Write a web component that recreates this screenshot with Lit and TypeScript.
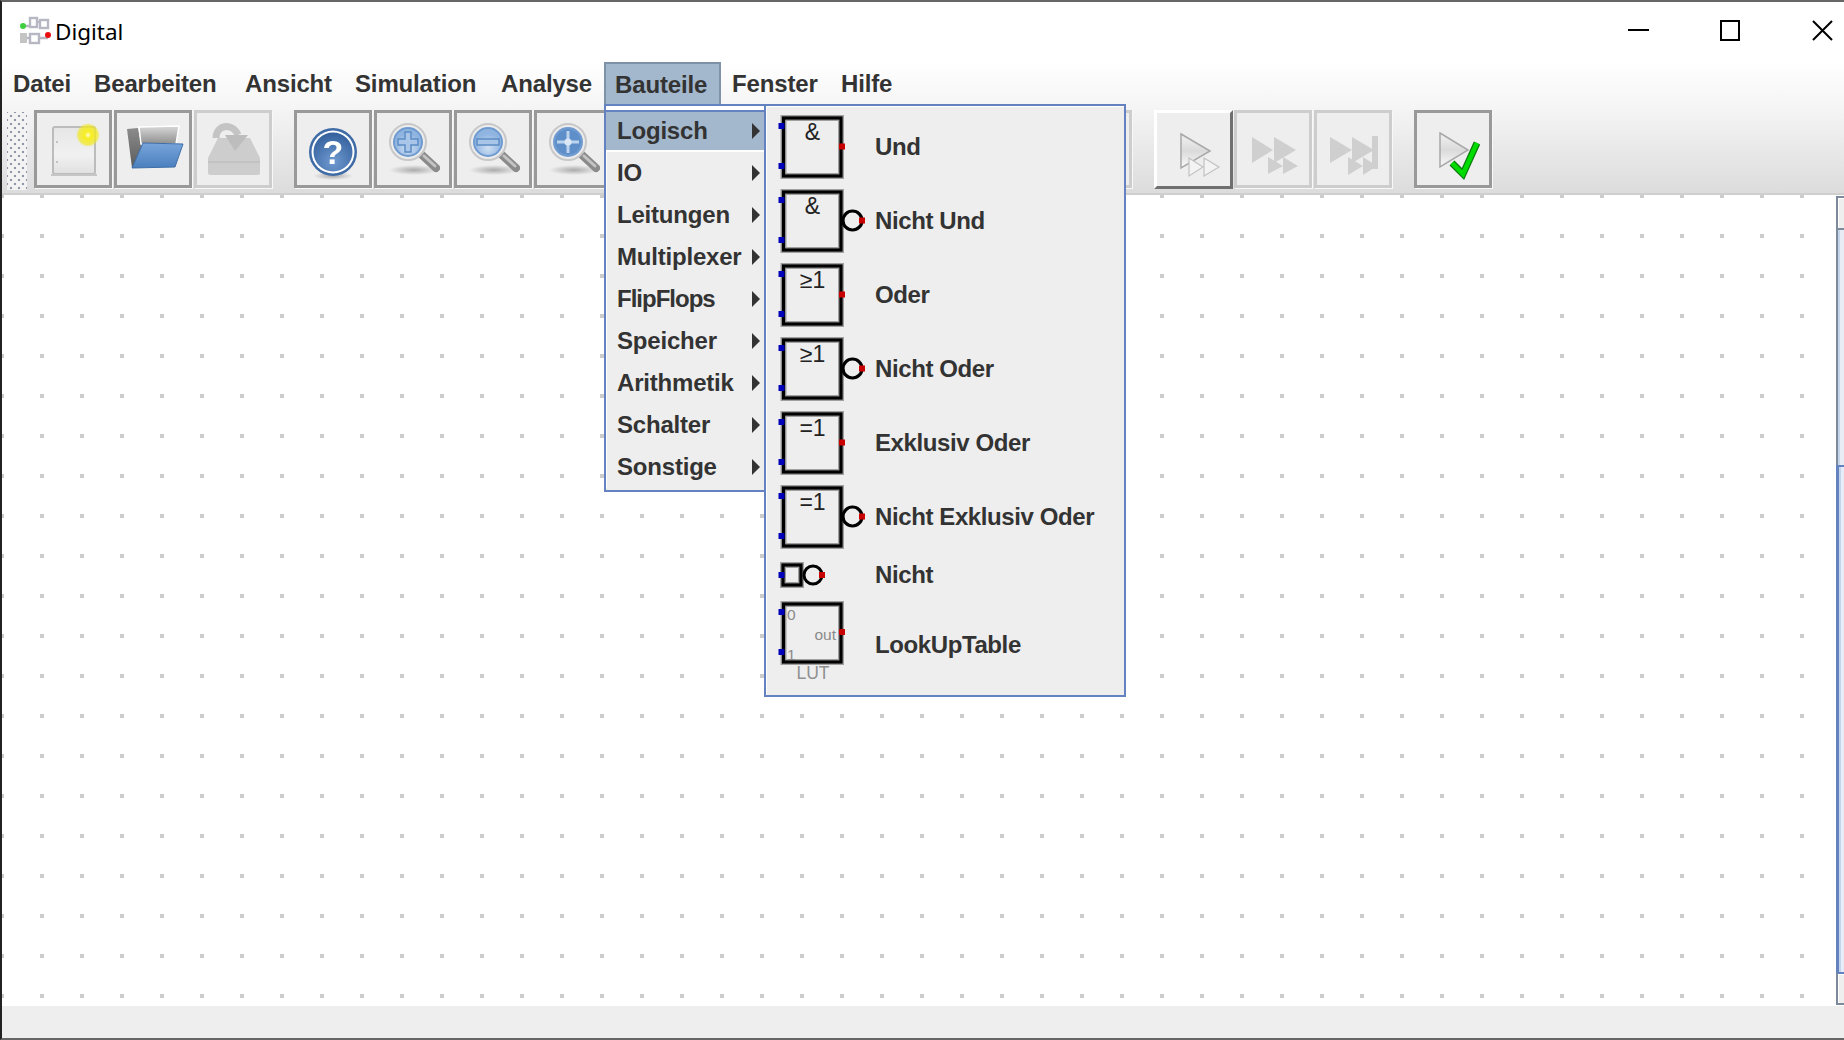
import { LitElement, html, css, svg } from "lit";
import { customElement } from "lit/decorators.js";

const MENUS = ["Datei", "Bearbeiten", "Ansicht", "Simulation", "Analyse", "Bauteile", "Fenster", "Hilfe"];
const GROUPS = ["Logisch", "IO", "Leitungen", "Multiplexer", "FlipFlops", "Speicher", "Arithmetik", "Schalter", "Sonstige"];

const gateBox = (label: string, bubble: boolean) => svg`
  <rect class="halo" x="16.5" y="8" width="57.5" height="58"></rect>
  <rect class="line" x="16.5" y="8" width="57.5" height="58"></rect>
  <text class="gl" x="45.5" y="30" text-anchor="middle">${label}</text>
  ${bubble ? svg`<circle class="line" cx="85.5" cy="36.5" r="9.5"></circle>` : ""}
  <rect class="in" x="11.5" y="13" width="6" height="6"></rect>
  <rect class="in" x="11.5" y="53" width="6" height="6"></rect>
  <rect class="out" x="${bubble ? 92 : 72}" y="33.5" width="6" height="6"></rect>`;

const notGate = svg`
  <rect class="halo" x="16" y="11" width="18" height="20"></rect>
  <rect class="line" x="16" y="11" width="18" height="20"></rect>
  <circle class="thin" cx="46" cy="21" r="9"></circle>
  <rect class="in" x="11.5" y="18" width="6" height="6"></rect>
  <rect class="out" x="52" y="18" width="6" height="6"></rect>`;

const lutGate = svg`
  <rect class="halo" x="16.5" y="8" width="57.5" height="58"></rect>
  <rect class="line" x="16.5" y="8" width="57.5" height="58"></rect>
  <text class="pin" x="20" y="24">0</text>
  <text class="pin" x="20" y="64">1</text>
  <text class="pin" x="69" y="44" text-anchor="end">out</text>
  <text class="lut-name" x="46" y="83" text-anchor="middle">LUT</text>
  <rect class="in" x="11.5" y="13" width="6" height="6"></rect>
  <rect class="in" x="11.5" y="53" width="6" height="6"></rect>
  <rect class="out" x="72" y="33" width="6" height="6"></rect>`;

const PARTS = [
  { name: "Und", size: "tall", h: 74, art: gateBox("&", false) },
  { name: "Nicht Und", size: "tall", h: 74, art: gateBox("&", true) },
  { name: "Oder", size: "tall", h: 74, art: gateBox("≥1", false) },
  { name: "Nicht Oder", size: "tall", h: 74, art: gateBox("≥1", true) },
  { name: "Exklusiv Oder", size: "tall", h: 74, art: gateBox("=1", false) },
  { name: "Nicht Exklusiv Oder", size: "tall", h: 74, art: gateBox("=1", true) },
  { name: "Nicht", size: "short", h: 42, art: notGate },
  { name: "LookUpTable", size: "lut", h: 98, art: lutGate },
];

const icon = (body: unknown) => html`<svg class="ico" viewBox="3 3 72 72" width="72" height="72">${body}</svg>`;

const magnifier = (inner: unknown) => svg`
  <ellipse cx="40" cy="60" rx="25" ry="5" fill="url(#shadow)"></ellipse>
  <line x1="48" y1="45" x2="62" y2="58" stroke="#8b8b8b" stroke-width="8" stroke-linecap="round"></line>
  <line x1="50" y1="46" x2="61" y2="56" stroke="#c4c4c4" stroke-width="3" stroke-linecap="round"></line>
  <circle cx="34" cy="32" r="18" fill="#ececec" stroke="#c8c8c8" stroke-width="2"></circle>
  <circle cx="34" cy="32" r="14" fill="url(#lens)" stroke="#6f9bd0" stroke-width="2"></circle>
  ${inner}`;

const ICONS = {
  newFile: svg`
    <rect x="19" y="17" width="42" height="47" rx="2" fill="url(#page)" stroke="#bcbcbc" stroke-width="2"></rect>
    <line x1="17" y1="65" x2="63" y2="65" stroke="#c6c6c6" stroke-width="2"></line>
    <circle cx="23" cy="32" r="1" fill="#b5b5b5"></circle><circle cx="23" cy="52" r="1" fill="#b5b5b5"></circle>
    <circle cx="54" cy="25" r="12" fill="url(#glow)"></circle>`,
  open: svg`
    <polygon points="13,19 24,18 32,57 18,58" fill="url(#folderBack)"></polygon>
    <polygon points="25,17 65,16 62,34 27,34" fill="url(#paper)" stroke="#fff" stroke-width="1.5"></polygon>
    <polygon points="29,33 69,34 61,57 18,58" fill="url(#folder)" stroke="#3d6ea8" stroke-width="1"></polygon>`,
  save: svg`
    <path d="M24 28 H56 L66 48 V63 Q66 65 64 65 H16 Q14 65 14 63 V48 Z" fill="#cdcdcd"></path>
    <path d="M14 52 H66" stroke="#c2c2c2" stroke-width="2"></path>
    <path d="M22 28 C22 15 38 12 44 25" fill="none" stroke="#c4c4c4" stroke-width="7"></path>
    <polygon points="31,25 54,25 41,41" fill="#bdbdbd"></polygon>`,
  help: svg`
    <ellipse cx="39" cy="66" rx="20" ry="4" fill="url(#shadow)"></ellipse>
    <circle cx="39" cy="42" r="24" fill="#3f6ba6"></circle>
    <circle cx="39" cy="42" r="21.5" fill="#fff"></circle>
    <circle cx="39" cy="42" r="19.5" fill="url(#helpFill)"></circle>
    <text class="q" x="39" y="54" text-anchor="middle">?</text>`,
  zoomIn: magnifier(svg`<path d="M31 22 H37 V29 H44 V35 H37 V42 H31 V35 H24 V29 H31 Z" fill="#a9c6e8" stroke="#5c8cc5" stroke-width="1.5"></path>`),
  zoomOut: magnifier(svg`<rect x="23" y="29" width="22" height="6" fill="#a9c6e8" stroke="#5c8cc5" stroke-width="1.5"></rect>`),
  fit: magnifier(svg`
    <circle cx="34" cy="32" r="13" fill="#5f8fc9"></circle>
    <path d="M32.5 21 H35.5 V30.5 H45 V33.5 H35.5 V43 H32.5 V33.5 H23 V30.5 H32.5 Z" fill="#bcd3ee"></path>
    <circle cx="34" cy="32" r="3.5" fill="#dce8f6"></circle>`),
  play: svg`
    <polygon points="26,23 55,40 26,57" fill="url(#tri)" stroke="#a8a8a8" stroke-width="1.5"></polygon>
    <polygon points="34,47 48,56 34,65" fill="#f3f3f3" stroke="#c2c2c2" stroke-width="1.2"></polygon>
    <polygon points="49,47 64,56 49,65" fill="#f3f3f3" stroke="#c2c2c2" stroke-width="1.2"></polygon>`,
  next: svg`
    <g fill="#cfcfcf"><polygon points="18,27 39,40 18,53"></polygon><polygon points="40,27 62,40 40,53"></polygon>
    <polygon points="34,47 49,56 34,64"></polygon><polygon points="49,47 64,56 49,64"></polygon></g>`,
  end: svg`
    <g fill="#cfcfcf"><polygon points="16,27 38,40 16,53"></polygon><polygon points="38,27 60,40 38,53"></polygon>
    <rect x="58" y="26" width="6" height="33"></rect>
    <polygon points="34,47 49,56 34,65"></polygon><polygon points="49,47 63,56 49,65"></polygon></g>`,
  check: svg`
    <polygon points="26,23 54,40 26,57" fill="url(#tri)" stroke="#a8a8a8" stroke-width="1.5"></polygon>
    <polyline points="38,53 49,64 63,33" fill="none" stroke="#0c7a0c" stroke-width="7" stroke-linejoin="miter"></polyline>
    <polyline points="38,53 49,64 63,33" fill="none" stroke="#00dc00" stroke-width="4.5"></polyline>`,
};

const TOOLS: { art?: unknown; kind: string; sep?: boolean }[] = [
  { art: ICONS.newFile, kind: "on" },
  { art: ICONS.open, kind: "on" },
  { art: ICONS.save, kind: "off" },
  { art: ICONS.help, kind: "on", sep: true },
  { art: ICONS.zoomIn, kind: "on" },
  { art: ICONS.zoomOut, kind: "on" },
  { art: ICONS.fit, kind: "on" },
  { kind: "off" },
  { kind: "off" },
  { kind: "off", sep: true },
  { kind: "off" },
  { kind: "off" },
  { kind: "off", sep: true },
  { art: ICONS.play, kind: "raised", sep: true },
  { art: ICONS.next, kind: "off" },
  { art: ICONS.end, kind: "off" },
  { art: ICONS.check, kind: "on", sep: true },
];

@customElement("app-root")
export class AppRoot extends LitElement {
  static styles = css`
    :host {
      display: flex;
      flex-direction: column;
      position: relative;
      box-sizing: border-box;
      width: 100%;
      height: 100vh;
      overflow: hidden;
      background: #fff;
      border-top: 2px solid #666;
      border-bottom: 2px solid #666;
      border-left: 2px solid #222;
      font-family: "Liberation Sans", Arial, sans-serif;
      color: #333;
    }
    .title {
      flex: none;
      height: 60px;
      display: flex;
      align-items: center;
      padding: 0 11px 0 16px;
      box-sizing: border-box;
      color: #000;
    }
    .logo { width: 34px; height: 32px; flex: none; margin-top: -2px; filter: blur(0.7px); }
    .app-name {
      font-family: "Noto Sans", sans-serif;
      font-size: 22.5px;
      margin-left: 3px;
      margin-top: -2px;
    }
    .win { margin-left: auto; display: flex; gap: 71px; align-items: center; margin-top: -4px; }
    .win svg { display: block; width: 21px; height: 21px; fill: none; stroke: #000; stroke-width: 2; }
    .menubar {
      flex: none;
      height: 45px;
      display: grid;
      grid-template-columns: 81px 151px 110px 146px 114px 117px 109px auto;
      justify-content: start;
      align-items: start;
      background: linear-gradient(#fff, #f5f5f5);
      font-size: 24px;
      font-weight: 700;
    }
    .mi {
      height: 42px;
      line-height: 43px;
      padding: 0 11px;
      box-sizing: border-box;
      letter-spacing: -0.15px;
      white-space: nowrap;
    }
    .mi.active {
      background: #a3b8cc;
      border: 2px solid #7e93a8;
      border-bottom: 0;
      line-height: 41px;
      padding: 0 9px;
    }
    .toolbar {
      flex: none;
      height: 88px;
      box-sizing: border-box;
      display: flex;
      align-items: flex-start;
      padding: 3px 0 0 5px;
      background: linear-gradient(#f5f5f5, #dcdcdc);
      border-bottom: 2px solid #cfcfcf;
    }
    .grip {
      flex: none;
      width: 20px;
      height: 78px;
      margin: 2px 7px 0 0;
      background-color: #f3f3f3;
      background-image:
        radial-gradient(circle, #8d97a8 1px, transparent 1.6px),
        radial-gradient(circle, #8d97a8 1px, transparent 1.6px);
      background-size: 8px 8px;
      background-position: 0 0, 4px 4px;
    }
    .defs { position: absolute; width: 0; height: 0; }
    .tb {
      flex: none;
      width: 78px;
      height: 78px;
      box-sizing: border-box;
      margin-right: 2px;
      display: flex;
      align-items: center;
      justify-content: center;
      background: #eee;
      border: 3px solid #999;
      box-shadow: 1px 1px 0 #f8f8f8;
    }
    .tb.off { border-color: #cdcdcd; }
    .tb.raised {
      border-color: #fff #707070 #707070 #fff;
      height: 79px;
      width: 79px;
      margin-right: 1px;
      box-shadow: none;
    }
    .tb.sep { margin-left: 20px; }
    .ico { display: block; flex: none; filter: blur(0.55px); overflow: visible; }
    .q { font: 700 34px "Liberation Sans", sans-serif; fill: #fff; }
    .work { flex: 1; min-height: 0; display: flex; }
    .canvas {
      flex: 1;
      background-color: #fff;
      background-image:
        linear-gradient(transparent 4px, #fff 4px),
        linear-gradient(90deg, #ccc 4px, transparent 4px);
      background-size: 40px 40px;
      background-position: -2px -1px;
    }
    .scroll { flex: none; width: 8px; display: flex; flex-direction: column; padding-top: 1px; background: #fff; }
    .sb-btn {
      flex: none;
      height: 32px;
      box-sizing: border-box;
      background: #eee;
      border-left: 2px solid #7c8a9b;
      border-top: 2px solid #7c8a9b;
      box-shadow: inset 1px 1px 0 #fff;
    }
    .sb-track {
      flex: none;
      height: 237px;
      box-sizing: border-box;
      border-left: 2px solid #7c8a9b;
      border-top: 2px solid #7c8a9b;
      background: linear-gradient(90deg, #c5d5ea 2px, #e8edf5 2px);
    }
    .sb-thumb {
      flex: none;
      height: 507px;
      box-sizing: border-box;
      border-left: 3px solid #6382bf;
      border-top: 2px solid #6382bf;
      background: linear-gradient(90deg, #c5d5ea 2px, #e6edf8 2px);
    }
    .sb-end { border-top-color: #6382bf; height: 33px; border-bottom: 2px solid #7c8a9b; }
    .status { flex: none; height: 32px; background: #eee; }
    .drop, .sub {
      position: absolute;
      top: 102px;
      box-sizing: border-box;
      border: 2px solid #6382bf;
      font-size: 24px;
      font-weight: 700;
      padding-top: 4px;
    }
    .drop { left: 602px; width: 162px; background: #fff; border-right: 0; }
    .row {
      height: 42px;
      box-sizing: border-box;
      display: flex;
      align-items: center;
      justify-content: space-between;
      padding: 0 6px 0 10px;
      background: #eee;
      margin-left: 1px;
      letter-spacing: -0.2px;
    }
    .row.hot {
      margin-left: 0;
      padding-left: 11px;
      background: #a3b8cc;
      border-top: 2px solid #6382bf;
      border-bottom: 2px solid #fff;
    }
    .row.FlipFlops { letter-spacing: -1px; }
    .drop-end { height: 2px; background: #eee; }
    .arrow {
      flex: none;
      width: 0;
      height: 0;
      border-left: 8px solid #333;
      border-top: 8px solid transparent;
      border-bottom: 8px solid transparent;
    }
    .sub {
      left: 762px;
      width: 362px;
      background: #eee;
      padding-bottom: 1px;
      box-shadow: inset 1px 1px 0 #fff;
    }
    .part { display: flex; align-items: center; letter-spacing: -0.4px; }
    .part.tall { height: 74px; }
    .part.short { height: 42px; }
    .part.lut { height: 98px; }
    .art { flex: none; display: block; width: 108px; height: 100%; margin-left: 1px; overflow: visible; }
    .halo { fill: none; stroke: #a0a0a0; stroke-width: 6; }
    .line { fill: none; stroke: #000; stroke-width: 3.2; }
    .thin { fill: none; stroke: #000; stroke-width: 3; }
    .in { fill: #0000b8; }
    .out { fill: #c80000; }
    .gl { font: 400 23px "Liberation Sans", sans-serif; fill: #222; letter-spacing: 0; }
    .pin { font: 400 15.5px "Liberation Sans", sans-serif; fill: #8a8a8a; letter-spacing: 0; }
    .lut-name { font: 400 17.5px "Liberation Sans", sans-serif; fill: #909090; letter-spacing: 0; }
  `;

  render() {
    return html`
      <header class="title">
        <svg class="logo" viewBox="0 0 34 32">
          <g fill="none" stroke="#b7b7c4" stroke-width="2.4">
            <rect x="12" y="3" width="7" height="9"></rect>
            <rect x="22" y="5" width="8" height="8"></rect>
            <rect x="12" y="19" width="9" height="9"></rect>
            <path d="M6 11 H12 M19 7 H22 M6 23 H12 M21 23 H30"></path>
          </g>
          <rect x="2" y="18" width="7" height="10" fill="#c4c4c4"></rect>
          <circle cx="5" cy="11" r="3" fill="#3ecf3e"></circle>
          <circle cx="30" cy="20" r="3" fill="#e81010"></circle>
        </svg>
        <span class="app-name">Digital</span>
        <div class="win">
          <svg viewBox="0 0 21 21"><path d="M0 10 H21"></path></svg>
          <svg viewBox="0 0 21 21"><rect x="1" y="1" width="18" height="19"></rect></svg>
          <svg viewBox="0 0 21 21"><path d="M1 1 L20 20 M20 1 L1 20"></path></svg>
        </div>
      </header>
      <nav class="menubar">
        ${MENUS.map((m) => html`<div class="mi ${m === "Bauteile" ? "active" : ""}">${m}</div>`)}
      </nav>
      <div class="toolbar">
        <svg class="defs">
          <defs>
            <linearGradient id="page" x1="0" y1="0" x2="0" y2="1"><stop offset="0" stop-color="#e6e6e6"></stop><stop offset="0.6" stop-color="#f1f1f1"></stop><stop offset="1" stop-color="#e0e0e0"></stop></linearGradient>
            <radialGradient id="glow"><stop offset="0" stop-color="#fffbd0"></stop><stop offset="0.3" stop-color="#f7ee20"></stop><stop offset="0.8" stop-color="#f2e820" stop-opacity="0.7"></stop><stop offset="1" stop-color="#f2e820" stop-opacity="0"></stop></radialGradient>
            <linearGradient id="folderBack" x1="0" y1="0" x2="0" y2="1"><stop offset="0" stop-color="#8c8c8c"></stop><stop offset="1" stop-color="#5a5a5a"></stop></linearGradient>
            <linearGradient id="paper" x1="0" y1="0" x2="0" y2="1"><stop offset="0" stop-color="#d8d8d8"></stop><stop offset="1" stop-color="#8f8f8f"></stop></linearGradient>
            <linearGradient id="folder" x1="0" y1="0" x2="0" y2="1"><stop offset="0" stop-color="#78a5da"></stop><stop offset="1" stop-color="#4a7fbe"></stop></linearGradient>
            <radialGradient id="shadow"><stop offset="0" stop-color="#aaa"></stop><stop offset="1" stop-color="#aaa" stop-opacity="0"></stop></radialGradient>
            <radialGradient id="helpFill" cy="0.75" r="0.8"><stop offset="0" stop-color="#6f9ad0"></stop><stop offset="1" stop-color="#2f5b98"></stop></radialGradient>
            <radialGradient id="lens" cy="0.7"><stop offset="0" stop-color="#cfe0f4"></stop><stop offset="1" stop-color="#8fb4e0"></stop></radialGradient>
            <linearGradient id="tri" x1="0" y1="0" x2="0" y2="1"><stop offset="0" stop-color="#f2f2f2"></stop><stop offset="0.5" stop-color="#dadada"></stop><stop offset="1" stop-color="#fafafa"></stop></linearGradient>
          </defs>
        </svg>
        <div class="grip"></div>
        ${TOOLS.map(
          (t) => html`<div class="tb ${t.kind} ${t.sep ? "sep" : ""}">${t.art ? icon(t.art) : ""}</div>`
        )}
      </div>
      <div class="work">
        <div class="canvas"></div>
        <div class="scroll">
          <div class="sb-btn"></div>
          <div class="sb-track"></div>
          <div class="sb-thumb"></div>
          <div class="sb-btn sb-end"></div>
        </div>
      </div>
      <div class="status"></div>

      <div class="drop">
        ${GROUPS.map(
          (g, i) => html`<div class="row ${g} ${i === 0 ? "hot" : ""}"><span>${g}</span><span class="arrow"></span></div>`
        )}
        <div class="drop-end"></div>
      </div>
      <div class="sub">
        ${PARTS.map(
          (p) => html`<div class="part ${p.size}">
            <svg class="art" viewBox="0 0 108 ${p.h}">${p.art}</svg>
            <span>${p.name}</span>
          </div>`
        )}
      </div>
    `;
  }
}
